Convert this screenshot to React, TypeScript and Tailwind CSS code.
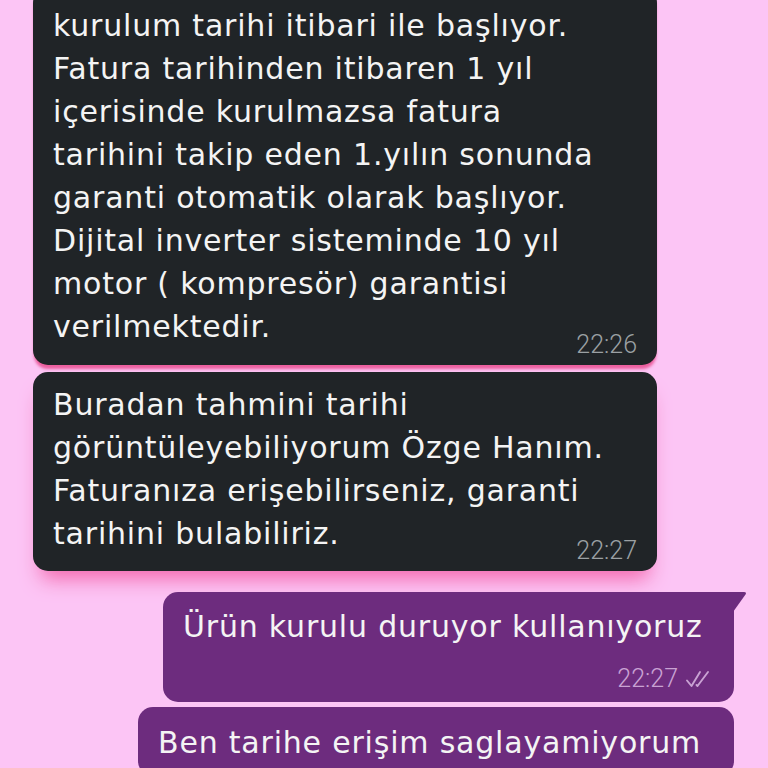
import React from "react";

const incomingA = [
    "kurulum tarihi itibari ile başlıyor.",
    "Fatura tarihinden itibaren 1 yıl",
    "içerisinde kurulmazsa fatura",
    "tarihini takip eden 1.yılın sonunda",
    "garanti otomatik olarak başlıyor.",
    "Dijital inverter sisteminde 10 yıl",
    "motor ( kompresör) garantisi",
    "verilmektedir.",
];

const incomingB = [
    "Buradan tahmini tarihi",
    "görüntüleyebiliyorum Özge Hanım.",
    "Faturanıza erişebilirseniz, garanti",
    "tarihini bulabiliriz.",
];

const textFont = "font-['DejaVu_Sans',sans-serif] text-[30px] leading-[43px] tracking-[0.8px] text-[#f4f4f4] whitespace-nowrap";
const timeFont = "font-['Roboto',sans-serif] font-light text-[25px] leading-[25px] h-[25px]";

const Lines: React.FC<{ lines: string[] }> = ({ lines }) => (
    <div className={textFont}>
        {lines.map((l) => (
            <div key={l}>{l}</div>
        ))}
    </div>
);

const DoubleCheck = () => (
    <svg width="28" height="20" viewBox="0 0 28 20" fill="none" stroke="#c9a2d3" strokeWidth="1.9" strokeLinecap="round" strokeLinejoin="round">
        <path d="M2 11.5 L6.5 17 L15 3" />
        <path d="M11.5 16 L12.5 17 L23 3" />
    </svg>
);

export default function App() {
    return (
        <div className="w-full h-[768px] overflow-hidden bg-[#fcc5f5] flex flex-col">
            {/* incoming, cut at top */}
            <div className="ml-[33px] w-[624px] -mt-[12px] pt-[16px] pb-[8px] pl-[20px] pr-[20px] bg-[#202427] rounded-[15px] shadow-[0_5px_3px_-1px_#ec5f9f] shrink-0">
                <Lines lines={incomingA} />
                <div className={`${timeFont} -mt-[16px] text-right text-[#9ba0a3]`}>22:26</div>
            </div>

            <div className="ml-[33px] mt-[7px] w-[624px] pt-[11px] pb-[8px] pl-[20px] pr-[20px] bg-[#202427] rounded-[15px] shadow-[0_16px_20px_-8px_rgba(242,100,170,0.95)] shrink-0">
                <Lines lines={incomingB} />
                <div className={`${timeFont} -mt-[17px] text-right text-[#9ba0a3]`}>22:27</div>
            </div>

            {/* outgoing */}
            <div className="self-end mr-[34px] mt-[21px] w-[571px] relative shrink-0">
                <div className="bg-[#6d2c7e] rounded-[15px] rounded-tr-none pt-[13px] pb-[11px] pl-[20px] pr-[21px]">
                    <Lines lines={["Ürün kurulu duruyor kullanıyoruz"]} />
                    <div className="mt-[18px] flex justify-end items-center gap-[7px]">
                        <span className={`${timeFont} text-[#c9a2d3]`}>22:27</span>
                        <DoubleCheck />
                    </div>
                </div>
                <svg className="absolute top-0 right-[-13px]" width="14" height="20" viewBox="0 0 14 20">
                    <path d="M0 0 L11 0 Q14 0 12.5 2.5 L0 20 Z" fill="#6d2c7e" />
                </svg>
            </div>

            <div className="self-end mr-[34px] mt-[5px] w-[596px] bg-[#6d2c7e] rounded-[15px] pt-[14px] pb-[12px] pl-[20px] pr-[20px] shrink-0">
                <Lines lines={["Ben tarihe erişim saglayamiyorum"]} />
            </div>
        </div>
    );
}
